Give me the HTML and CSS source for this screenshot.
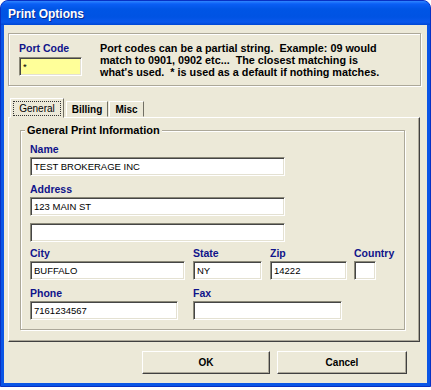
FILE: index.html
```html
<!DOCTYPE html>
<html>
<head>
<meta charset="utf-8">
<link rel="stylesheet" href="styles.css">
</head>
<body>
<div class="window">
  <div class="titlebar"><span class="title">Print Options</span></div>
  <div class="client">
    <div class="portbox">
      <div class="portcol">
        <div class="portlbl">Port Code</div>
        <div class="field yellow">*</div>
      </div>
      <p class="desc">Port codes can be a partial string.&nbsp; Example: 09 would<br>match to 0901, 0902 etc...&nbsp; The closest matching is<br>what's used.&nbsp; * is used as a default if nothing matches.</p>
    </div>
    <div class="tabs">
      <div class="tab active"><span class="focus">General</span></div>
      <div class="tab billing">Billing</div>
      <div class="tab misc">Misc</div>
    </div>
    <div class="panel">
      <fieldset class="group">
        <legend>General Print Information</legend>
        <div class="lbl">Name</div>
        <div class="field wide gap6">TEST BROKERAGE INC</div>
        <div class="lbl">Address</div>
        <div class="field wide gap7">123 MAIN ST</div>
        <div class="field wide gap4"></div>
        <div class="row gap6">
          <div class="col city"><div class="lbl">City</div><div class="field">BUFFALO</div></div>
          <div class="col state"><div class="lbl">State</div><div class="field">NY</div></div>
          <div class="col zip"><div class="lbl">Zip</div><div class="field">14222</div></div>
          <div class="col country"><div class="lbl">Country</div><div class="field small"></div></div>
        </div>
        <div class="row">
          <div class="col phone"><div class="lbl">Phone</div><div class="field">7161234567</div></div>
          <div class="col fax"><div class="lbl">Fax</div><div class="field"></div></div>
        </div>
      </fieldset>
    </div>
    <div class="buttons">
      <button class="btn ok">OK</button>
      <button class="btn cancel">Cancel</button>
    </div>
  </div>
</div>
</body>
</html>
```

FILE: styles.css
```css
* { box-sizing: border-box; }
body {
  margin: 0;
  background: #ffffff;
  font-family: "Liberation Sans", Arial, sans-serif;
}
.window {
  width: 431px;
  height: 387px;
  display: flex;
  flex-direction: column;
  background: #0a55e6;
  border: 1px solid #0831c4;
  border-radius: 8px 8px 0 0;
  padding: 0 3px 3px;
}
.titlebar {
  height: 24px;
  margin: 0 -3px;
  border-radius: 7px 7px 0 0;
  background: linear-gradient(180deg, #2f86ff 0px, #0a5ef5 3px, #0055e5 8px, #0053e3 16px, #0a58ec 21px, #0047d4 24px);
  display: flex;
  align-items: center;
  padding: 2px 0 0 7px;
}
.title {
  color: #ffffff;
  font-weight: bold;
  font-size: 12px;
  text-shadow: 1px 1px 0 #0b2a8e;
}
.client {
  flex: 1;
  background: #ece9d8;
  padding: 8px 6px 0 4px;
  display: flex;
  flex-direction: column;
}
.portbox {
  height: 53px;
  border: 1px solid #aca899;
  box-shadow: inset 1px 1px 0 #ffffff, 1px 1px 0 #ffffff;
  display: flex;
  padding: 8px 0 0 10px;
}
.portcol { width: 63px; margin-right: 18px; }
.portlbl {
  font-size: 10.5px;
  font-weight: bold;
  color: #10148a;
  line-height: 13px;
  margin-bottom: 2px;
}
.desc {
  margin: 0;
  font-size: 10.8px;
  font-weight: bold;
  line-height: 12px;
  color: #000;
}
.field {
  height: 19px;
  background: #ffffff;
  border: 1px solid;
  border-color: #8a8878 #ffffff #ffffff #8a8878;
  box-shadow: inset 1px 1px 0 #454545, inset -1px -1px 0 #e4e1d2;
  font-size: 9.5px;
  line-height: 17px;
  padding-left: 3px;
  color: #000;
  white-space: nowrap;
}
.yellow { background: #ffff99; }
.tabs {
  margin-top: 12px;
  height: 19px;
  display: flex;
  align-items: flex-end;
  padding-left: 2px;
  position: relative;
  z-index: 1;
}
.tab {
  height: 16px;
  border: 1px solid;
  border-color: #ffffff #716f64 transparent #ffffff;
  background: #ece9d8;
  font-size: 10px;
  font-weight: bold;
  display: flex;
  align-items: center;
  justify-content: center;
}
.tab.active {
  width: 54px;
  height: 20px;
  margin-bottom: -1px;
  font-weight: normal;
  padding-top: 1px;
}
.focus {
  border: 1px dotted #333;
  padding: 1px 5px;
  line-height: 11px;
}
.billing { width: 42px; margin-left: 2px; }
.misc { width: 35px; margin-left: 1px; }
.panel {
  height: 225px;
  margin-right: 1px;
  border: 1px solid;
  border-color: #ffffff #404040 #404040 #ffffff;
  box-shadow: inset -1px -1px 0 #aca899;
  padding: 5px 14px 0 11px;
}
.group {
  margin: 0;
  min-width: 0;
  border: 1px solid #aca899;
  box-shadow: inset 1px 1px 0 #ffffff, 1px 1px 0 #ffffff;
  padding: 5px 0 9px 9px;
}
.group legend {
  font-size: 11px;
  font-weight: bold;
  line-height: 14px;
  padding: 0 2px;
  margin-left: -5px;
  background: #ece9d8;
  color: #000;
}
.lbl {
  font-size: 10.5px;
  font-weight: bold;
  color: #10148a;
  line-height: 14px;
  margin-bottom: 1px;
  white-space: nowrap;
}
.wide { width: 255px; }
.gap6 { margin-bottom: 6px; }
.gap7 { margin-bottom: 7px; }
.gap4 { margin-bottom: 4px; }
.row { display: flex; }
.city { width: 155px; }
.state { width: 69px; margin-left: 8px; }
.zip { width: 77px; margin-left: 8px; }
.country { width: 41px; margin-left: 7px; }
.small { width: 22px; }
.phone { width: 148px; }
.fax { width: 149px; margin-left: 15px; }
.buttons {
  margin-top: 9px;
  display: flex;
  justify-content: flex-end;
  gap: 7px;
  padding-right: 14px;
}
.btn {
  height: 23px;
  background: #ece9d8;
  border: 1px solid;
  border-color: #ffffff #404040 #404040 #ffffff;
  box-shadow: inset -1px -1px 0 #aca899;
  font-family: "Liberation Sans", Arial, sans-serif;
  font-size: 10px;
  font-weight: bold;
  color: #000;
  padding: 0;
}
.ok { width: 128px; }
.cancel { width: 130px; }
```
